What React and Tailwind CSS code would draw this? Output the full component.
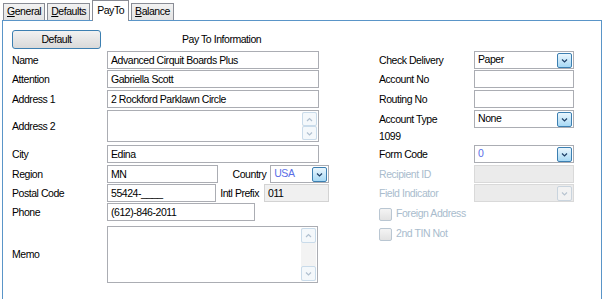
import { useState } from 'react';

function Chevron({ dir = 'down', color = '#2b4a7a' }) {
  const d = dir === 'down' ? 'M2 3.5 L4.5 6 L7 3.5' : 'M2 6 L4.5 3.5 L7 6';
  return (
    <svg width="9" height="9" viewBox="0 0 9 9">
      <path d={d} fill="none" stroke={color} strokeWidth="1.2" />
    </svg>
  );
}

function DropBtn({ disabled }) {
  return (
    <div
      className={
        disabled
          ? 'flex h-[15px] w-[15px] items-center justify-center rounded-[2px] border border-[#c9d4de] bg-[#f2f2f2]'
          : 'flex h-[15px] w-[15px] items-center justify-center rounded-[2px] border border-[#3c7fb1] bg-gradient-to-b from-[#eaf6fd] to-[#a7d9f5]'
      }
    >
      <Chevron color={disabled ? '#b8c4d0' : '#1e3f66'} />
    </div>
  );
}

function Select({ value, width, disabled, blue }) {
  return (
    <div
      className={
        'flex h-[18px] items-center justify-between border pl-[3px] pr-[1px] ' +
        (disabled ? 'border-[#d9d9d9] bg-[#ebebeb]' : 'border-[#abadb3] bg-white')
      }
      style={{ width }}
    >
      <span className={blue ? 'text-[#5a6ee6]' : 'text-black'}>{value}</span>
      <DropBtn disabled={disabled} />
    </div>
  );
}

function Input({ value = '', width, gray, disabled }) {
  return (
    <div
      className={
        'flex h-[18px] items-center whitespace-nowrap border pl-[3px] pt-px ' +
        (disabled
          ? 'border-[#d9d9d9] bg-[#ebebeb]'
          : gray
          ? 'border-[#d3d3d3] bg-[#f0f0f0]'
          : 'border-[#abadb3] bg-white')
      }
      style={{ width }}
    >
      {value}
    </div>
  );
}

function ScrollBtn({ dir }) {
  return (
    <div className="flex h-[15px] w-[15px] items-center justify-center rounded-[2px] border border-[#c9dbea] bg-[#f4f8fb]">
      <Chevron dir={dir} color="#b0c0d0" />
    </div>
  );
}

function TextArea({ width, height }) {
  return (
    <div
      className="flex justify-end border border-[#abadb3] bg-white p-px"
      style={{ width, height }}
    >
      <div className="flex w-[15px] flex-col justify-between bg-[#f3f3f3]">
        <ScrollBtn dir="up" />
        <ScrollBtn dir="down" />
      </div>
    </div>
  );
}

function Row({ label, children, mt, h = 18, disabled }) {
  return (
    <div className="flex items-center whitespace-nowrap" style={{ marginTop: mt, height: h }}>
      <span className={'w-[95px] shrink-0 pt-px ' + (disabled ? 'text-[#a9bccd]' : '')}>{label}</span>
      {children}
    </div>
  );
}

function Check({ label, mt }) {
  return (
    <div className="flex h-[18px] items-center gap-[4px] text-[#a9bccd]" style={{ marginTop: mt }}>
      <div className="h-[13px] w-[13px] rounded-[2px] border border-[#b9c6d2] bg-gradient-to-b from-[#f4f4f4] to-[#e2e2e2]" />
      <span>{label}</span>
    </div>
  );
}

function Tab({ label, ul, active }) {
  const rest = label.slice(ul ? 1 : 0);
  return (
    <div
      className={
        active
          ? 'relative z-10 -mb-px flex h-[21px] items-center border border-b-0 border-[#898c95] bg-white px-[4px]'
          : 'flex h-[17px] items-center border border-b-0 border-[#898c95] bg-gradient-to-b from-[#f2f2f2] to-[#e3e3e3] px-[3px]'
      }
    >
      {ul ? <span className="underline">{label[0]}</span> : null}
      {rest}
    </div>
  );
}

export default function App() {
  const [tab] = useState('PayTo');

  return (
    <div className="h-[299px] w-[604px] overflow-hidden bg-white font-['Liberation_Sans',Arial,sans-serif] text-[10.5px] tracking-[-0.45px] text-black">
      <div className="flex h-[20px] items-end gap-[2px] pl-[3px]">
        <Tab label="General" ul />
        <Tab label="Defaults" ul />
        <Tab label="PayTo" active={tab === 'PayTo'} />
        <Tab label="Balance" ul />
      </div>

      <div className="ml-[2px] h-[300px] w-[600px] border border-[#5a95c8] pl-[9px] pt-[9px]">
        <div className="flex items-center">
          <button className="h-[19px] w-[89px] rounded-[3px] border border-[#3c7fb1] bg-gradient-to-b from-[#f2f2f2] to-[#d9d9d9]">
            Default
          </button>
          <span className="ml-[81px]">Pay To Information</span>
        </div>

        <div className="flex">
          <div className="w-[317px] shrink-0">
            <Row label="Name" mt={2}>
              <Input value="Advanced Cirquit Boards Plus" width={212} />
            </Row>
            <Row label="Attention" mt={1}>
              <Input value="Gabriella Scott" width={212} />
            </Row>
            <Row label="Address 1" mt={2}>
              <Input value="2 Rockford Parklawn Circle" width={212} />
            </Row>
            <Row label="Address 2" mt={2} h={32}>
              <TextArea width={212} height={32} />
            </Row>
            <Row label="City" mt={3}>
              <Input value="Edina" width={212} />
            </Row>
            <Row label="Region" mt={2}>
              <Input value="MN" width={111} />
              <span className="ml-[15px] mr-[4px] pt-px">Country</span>
              <Select value="USA" width={59} blue />
            </Row>
            <Row label="Postal Code" mt={1}>
              <Input value="55424-____" width={111} />
              <span className="ml-[4px] mr-[5px] pt-px">Intl Prefix</span>
              <Input value="011" width={66} gray />
            </Row>
            <Row label="Phone" mt={1}>
              <Input value="(612)-846-2011" width={148} />
            </Row>
            <Row label="Memo" mt={5} h={57}>
              <TextArea width={211} height={57} />
            </Row>
          </div>

          <div className="ml-[50px] w-[200px]">
            <Row label="Check Delivery" mt={2}>
              <Select value="Paper" width={100} />
            </Row>
            <Row label="Account No" mt={1}>
              <Input width={100} />
            </Row>
            <Row label="Routing No" mt={2}>
              <Input width={100} />
            </Row>
            <Row label="Account Type" mt={2}>
              <Select value="None" width={100} />
            </Row>
            <div className="flex h-[17px] items-center pt-px">1099</div>
            <Row label="Form Code" mt={0}>
              <Select value="0" width={100} blue />
            </Row>
            <Row label="Recipient ID" mt={2} disabled>
              <Input width={100} disabled />
            </Row>
            <Row label="Field Indicator" mt={1} disabled>
              <Select value="" width={100} disabled />
            </Row>
            <Check label="Foreign Address" mt={3} />
            <Check label="2nd TIN Not" mt={2} />
          </div>
        </div>
      </div>
    </div>
  );
}
